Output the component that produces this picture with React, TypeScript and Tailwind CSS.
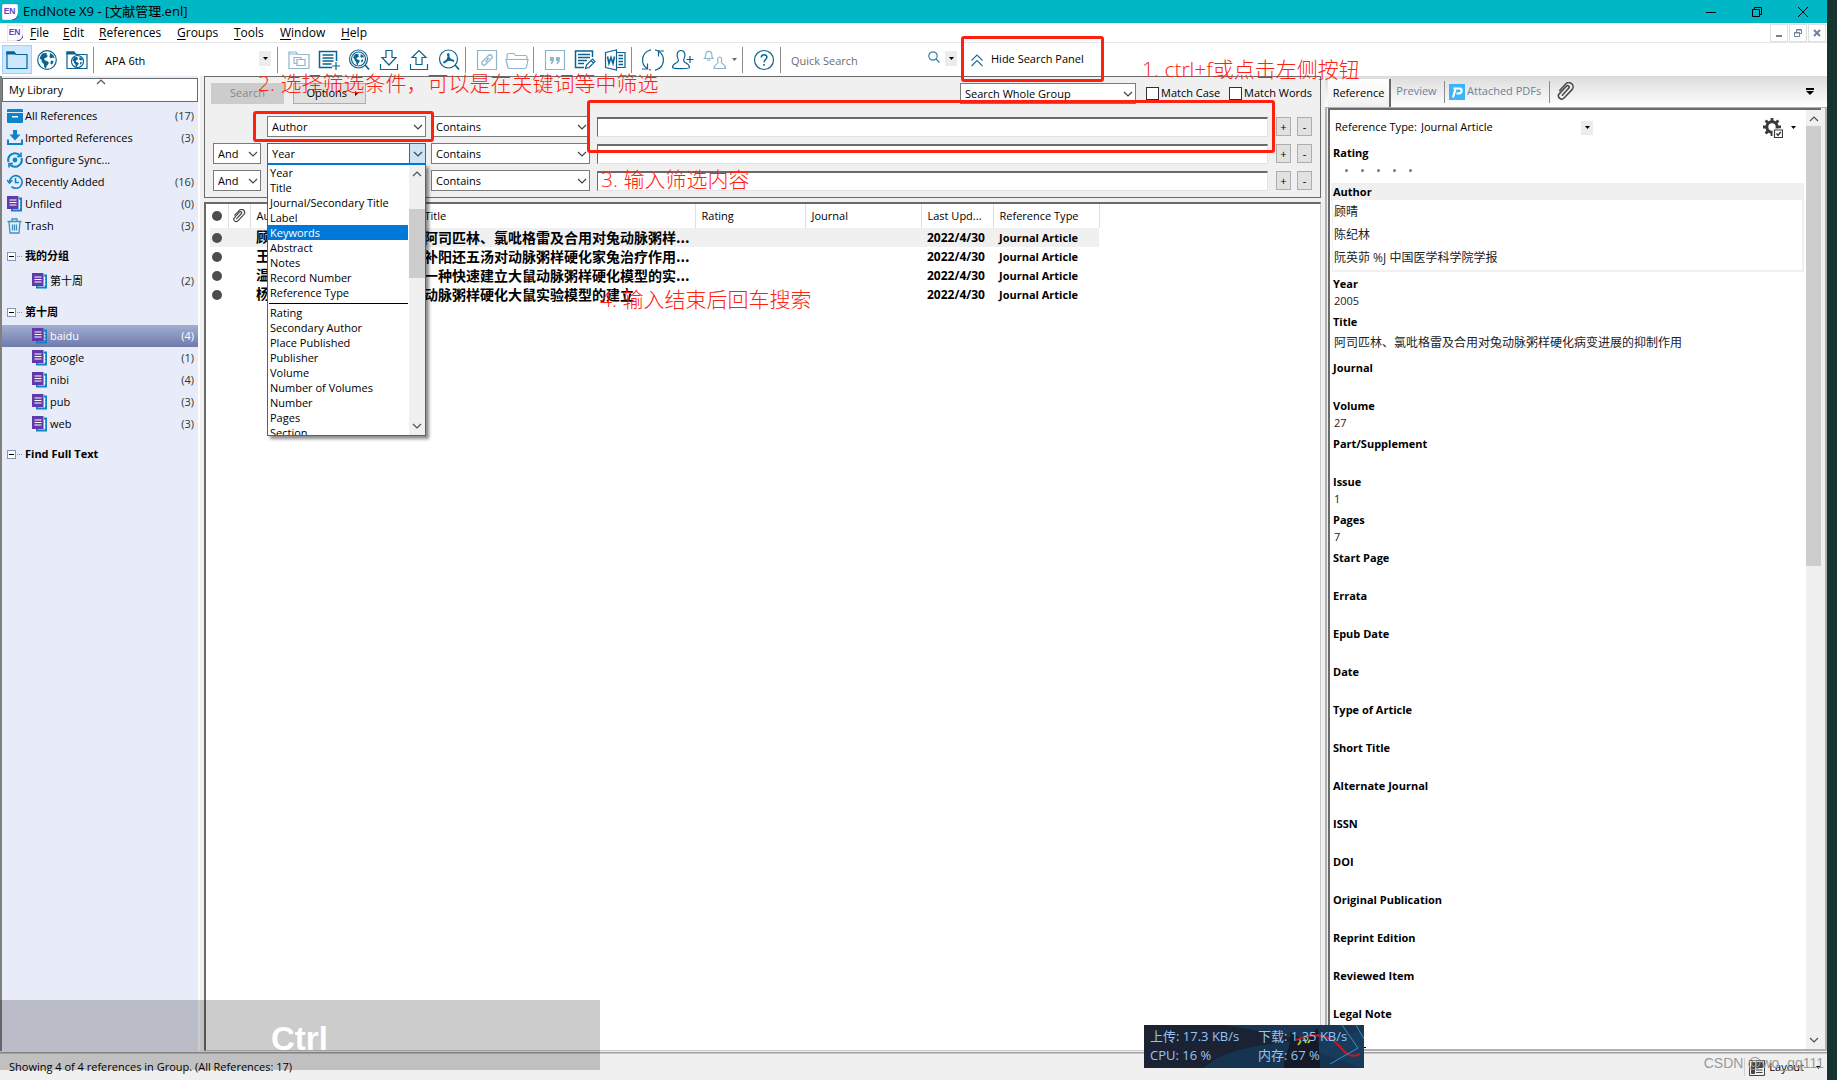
import React from "react";

const SANS = "font-['Open_Sans','Noto_Sans_CJK_SC',sans-serif]";

/* ---------- small shared pieces ---------- */

function Chevron({ up = false, className = "" }: { up?: boolean; className?: string }) {
  return (
    <svg viewBox="0 0 10 6" className={"h-[6px] w-[10px] " + className} fill="none" stroke="currentColor" strokeWidth="1.2">
      <path d={up ? "M1 5 5 1 9 5" : "M1 1 5 5 9 1"} />
    </svg>
  );
}

function Caret({ className = "" }: { className?: string }) {
  return (
    <svg viewBox="0 0 5 3" className={"h-[3px] w-[5px] " + className} fill="currentColor">
      <path d="M0 0h5L2.5 3z" />
    </svg>
  );
}

function Note({ children, className }: { children: React.ReactNode; className: string }) {
  return (
    <span
      className={
        "pointer-events-none absolute z-30 font-['Open_Sans','Noto_Sans_CJK_SC',sans-serif] text-[21px] leading-[28px] font-light whitespace-nowrap text-[#ff2010] " +
        className
      }
    >
      {children}
    </span>
  );
}

function Select({ label, value, options, className, open = false }: { label: string; value: string; options: string[]; className: string; open?: boolean }) {
  return (
    <span className={"relative block h-[21px] shrink-0 " + className}>
      <select
        aria-label={label}
        defaultValue={value}
        className={
          "block h-full w-full appearance-none border bg-white pl-1 text-[11px] leading-[19px] outline-none " +
          (open ? "border-[#0078d7]" : "border-[#7a7a7a]")
        }
      >
        {options.map((o) => (
          <option key={o}>{o}</option>
        ))}
      </select>
      <span
        className={
          "pointer-events-none absolute inset-y-0 right-0 flex w-[17px] items-center justify-center text-[#444] " +
          (open ? "border border-[#0078d7] bg-[#cce4f7]" : "")
        }
      >
        <Chevron />
      </span>
    </span>
  );
}

function EndNoteLogo() {
  return (
    <svg viewBox="0 0 16 16" className="size-4 shrink-0">
      <path d="M2 0h12a2 2 0 0 1 2 2v10l-4 4H2a2 2 0 0 1-2-2V2a2 2 0 0 1 2-2z" fill="#fff" stroke="#b9b9c6" strokeWidth=".6" />
      <path d="M16 9v3.500l-3.500 3.500H9C13 15 15.500 13 16 9z" fill="#5a2fb0" />
      <text x="7.600" y="10.200" textAnchor="middle" fontSize="8.500" fontWeight="700" fill="#6a3fc4" fontFamily="Liberation Sans, sans-serif">EN</text>
    </svg>
  );
}

function Paperclip({ className }: { className: string }) {
  return (
    <svg viewBox="0 0 18 18" className={className} fill="none" stroke="currentColor" strokeWidth="1.500" strokeLinecap="round">
      <path d="M6 12.500 12.200 5.800a1.500 1.500 0 0 0-2.200-2L3.200 11a3 3 0 0 0 4.400 4.200L15.200 7.200a4 4 0 0 0-5.800-5.500L3.500 8" />
    </svg>
  );
}

/* ---------- toolbar icons ---------- */

const land = (
  <path
    d="M6 4.500c2-.5 4-.8 5-.3l-.5 1.800 1.500.8-1.500 1.700-2 .8-.2 1.800 2.200.9 2.300 1-.6 2.200-1.700 2-.6 2.300-1.700-1.200-.4-3.300-1.900-1.700-.5-2.500-1.900-1.600zM14 4l3.200 2 1.600 3.200-2.300-.6-1.600.8-1.600-1.700.6-1.600zM15.300 11.500l2.200.4-.6 2.500-1.800 1.400-.7-2.300z"
    fill="currentColor"
    stroke="none"
  />
);

const icons: Record<string, React.ReactNode> = {
  folder: (
    <>
      <path d="M1 19.500V3h7l2 2.500h11v14z" />
      <path d="M1 3h7l1 2H1z" fill="currentColor" />
    </>
  ),
  globe: (
    <>
      <circle cx="11" cy="11" r="9.300" />
      {land}
    </>
  ),
  folderGlobe: (
    <>
      <path d="M1 19.500V3h7l2 2.500h11v14z" />
      <path d="M1 3h7l1 2H1z" fill="currentColor" />
      <circle cx="11.500" cy="12.500" r="6" />
      <g transform="translate(4.300 5.300) scale(.66)">{land}</g>
    </>
  ),
  copyFolder: (
    <>
      <path d="M1 19.500V3h7l2 2.500h11v14zM1 5h8" />
      <path d="M6 14.500V8.500h7v2M6 14.500h3M9 10.500h8v6H9z" />
    </>
  ),
  listPlus: (
    <>
      <path d="M18.500 12V2.500h-17v16H14M4.500 6h11M4.500 9h11M4.500 12h11M4.500 15h9" strokeWidth="1.500" />
      <path d="M18 13v8M14 17h8" />
    </>
  ),
  globeSearch: (
    <>
      <circle cx="10.500" cy="10" r="9" />
      <circle cx="10.500" cy="10" r="7" />
      <g transform="translate(2.500 2) scale(.73)">{land}</g>
      <path d="m17 16 4 4.500" strokeWidth="1.800" />
    </>
  ),
  download: <path d="M8 1.500h6v7h4l-7 7.500-7-7.500h4zM2.500 15v5.500h17V15" />,
  upload: <path d="M8 15.500h6v-7h4L11 1.500 4 8.500h4zM2.500 15v5.500h17V15" />,
  fullText: (
    <>
      <circle cx="10.500" cy="10" r="9" />
      <path d="M10 4.500c2 3-1 8-4.500 9.500M10 4.500c-1 4 3 7 6 7.500M5.500 14c2-3 7-4 10.500-2" strokeWidth="1.800" />
      <path d="m17 16 4 4.500" strokeWidth="1.800" />
    </>
  ),
  link: (
    <>
      <path d="M1.500 1.500h19v19h-19z" />
      <path d="m9.500 12.500 3.500-3.500M10.500 8.500l2-2a2 2 0 0 1 3 3l-3 3a2 2 0 0 1-2.500 0M11.500 13.500l-2 2a2 2 0 0 1-3-3l3-3a2 2 0 0 1 2.500 0" />
    </>
  ),
  openFolder: <path d="M1 10V6.500C1 5 2 4.500 3 4.500h5l1.500 2h10c1 0 1.500.5 1.500 1.500v2M0 10.500h22l-1.500 7.500c-.2 1-1 1.500-2 1.500h-15c-1 0-1.500-.5-1.800-1.500z" />,
  quote: (
    <>
      <path d="M1.500 1.500h19v19h-19z" />
      <path d="M6 8h3.800v4.200L8 15H6.500l1.200-3H6zM12 8h3.800v4.200L14 15h-1.500l1.200-3H12z" fill="currentColor" stroke="none" />
    </>
  ),
  edit: (
    <>
      <path d="M18.500 8V2h-17v16.500H10" strokeWidth="1.500" />
      <path d="M4 5.500h12M4 8.500h12M4 11.500h9M4 14.500h6" strokeWidth="1.600" />
      <path d="m11.500 19.500 1-3.500 6-6 2.500 2.500-6 6zM17 11.500l2.500 2.500" />
    </>
  ),
  word: (
    <>
      <path d="M13 3.500h8v15h-8" />
      <path d="M14.500 6.500h4.500M14.500 9.500h4.500M14.500 12.500h4.500M14.500 15.500h4.500" strokeWidth="1.500" />
      <path d="M1.500 3.500 12.500 1v20L1.500 18.500z" />
      <path d="m3.500 7.500 1.500 7 2-6 2 6 1.500-7" strokeWidth="1.600" />
    </>
  ),
  sync: (
    <>
      <path d="M5 19.500A10.300 10.300 0 0 1 7 1.500a10.300 10.300 0 0 1 10 1M17 2.500A10.300 10.300 0 0 1 15 20.500a10.300 10.300 0 0 1-8 0" strokeDasharray="24 4" />
      <path d="M0 20h5.500v-5.500M22 2h-5.500v5.500" />
    </>
  ),
  userPlus: (
    <path d="M6 10c-1.500-3-1.500-8.500 3-8.500s4.500 5.500 3 8.500c-1 2 0 3 2 4s3.500 2 3.500 4.500c0 1.500-17 1.500-17 0C.5 16 2 15 4 14s3-2 2-4zM14.500 10.500h7M18 7v7" />
  ),
  help: (
    <>
      <circle cx="11" cy="11" r="9.500" />
      <path d="M8.300 8.500c0-3.800 5.600-3.600 5.600-.2 0 2.200-2.800 2.200-2.800 5" strokeWidth="1.500" />
      <path d="M11 15v1.800" strokeWidth="1.600" />
    </>
  ),
};

function ToolButton({ name, label, dim = false, active = false }: { name: string; label: string; dim?: boolean; active?: boolean }) {
  return (
    <button
      type="button"
      aria-label={label}
      className={
        "flex h-[29px] w-[30px] shrink-0 items-center justify-center " +
        (active ? "border border-[#99d1ff] bg-[#cce8ff] " : "") +
        (dim ? "text-[#8db5cc]" : "text-[#0b6391]")
      }
    >
      <svg viewBox="0 0 22 22" className="size-[22px] shrink-0 overflow-visible" fill="none" stroke="currentColor" strokeWidth="1.200">
        {icons[name]}
      </svg>
    </button>
  );
}

function ToolSep() {
  return <span className="mr-[6px] ml-px h-[26px] w-px shrink-0 bg-[#8c8c8c]" />;
}

function Toolbar() {
  return (
    <div className="flex h-[33px] shrink-0 items-center bg-white pl-[2px]">
      <ToolButton name="folder" label="Local library" active />
      <ToolButton name="globe" label="Online search" />
      <ToolButton name="folderGlobe" label="Integrated library" />
      <ToolSep />
      <span className="relative mr-[5px] w-[171px] shrink-0">
        <select aria-label="Output style" className="h-[22px] w-full appearance-none pl-[5px] text-[11px]">
          <option>APA 6th</option>
        </select>
        <span className="pointer-events-none absolute top-1 right-0 flex h-[15px] w-3 items-center justify-center bg-[#ececec]">
          <Caret />
        </span>
      </span>
      <ToolSep />
      <ToolButton name="copyFolder" label="Copy to local library" dim />
      <ToolButton name="listPlus" label="New reference" />
      <ToolButton name="globeSearch" label="Online search" />
      <ToolButton name="download" label="Import" />
      <ToolButton name="upload" label="Export" />
      <ToolButton name="fullText" label="Find full text" />
      <ToolSep />
      <ToolButton name="link" label="Open link" dim />
      <ToolButton name="openFolder" label="Open file" dim />
      <ToolSep />
      <ToolButton name="quote" label="Insert citation" dim />
      <ToolButton name="edit" label="Format bibliography" />
      <ToolButton name="word" label="Return to Word" />
      <ToolSep />
      <ToolButton name="sync" label="Sync library" />
      <ToolButton name="userPlus" label="Share library" />
      <button type="button" aria-label="Activity feed" className="flex h-[29px] w-[43px] shrink-0 items-center justify-between pr-1 pl-[6px] text-[#8db5cc]">
        <svg viewBox="0 0 22 22" className="size-[22px] overflow-visible" fill="none" stroke="currentColor" strokeWidth="1.200">
          <path d="M.5 9.500h8.500c-1.500-1.500-1-2.500-1.300-4.500-.4-3.500-5.500-3.500-5.900 0C1.500 7 2 8 .5 9.500zM3.500 10.500c.5 1.300 2 1.300 2.500 0" />
          <path d="M14.200 13c-1-2-.8-5 1.500-5s2.500 3 1.500 5c-.5 1.500 4.300 2 4.300 6.500H10c0-4.500 4.800-5 4.200-6.500z" />
        </svg>
        <Caret className="text-[#666]" />
      </button>
      <ToolSep />
      <ToolButton name="help" label="Help" />
      <ToolSep />
      <label className="relative block w-[170px] shrink-0">
        <input aria-label="Quick Search" placeholder="Quick Search" className="h-[22px] w-full pr-8 pl-1 text-[11px] outline-none placeholder:text-[#6d6d6d]" />
        <svg viewBox="0 0 12 12" className="absolute top-1 right-[17px] size-3" fill="none" stroke="#3a81a8" strokeWidth="1.200">
          <circle cx="5" cy="5" r="4.200" />
          <path d="m8 8 3.500 3.500" />
        </svg>
        <span className="absolute top-1 right-0 flex h-[15px] w-3 items-center justify-center bg-[#ececec]">
          <Caret />
        </span>
      </label>
      <div className="relative ml-1 shrink-0">
        <button type="button" className="flex h-[22px] items-center gap-2 px-[10px] text-[11px] whitespace-nowrap">
          <svg viewBox="0 0 12 12" className="size-3 overflow-visible" fill="none" stroke="#1b6f9b" strokeWidth="1.100">
            <path d="m.5 6.500 5.500-5.500 5.500 5.500M.5 12 6 6.500 11.500 12" />
          </svg>
          Hide Search Panel
        </button>
        <span className="pointer-events-none absolute -top-[13px] left-0 z-20 h-[46px] w-[143px] rounded-[3px] border-3 border-[#ff2010]" />
        <Note className="top-[6px] left-[181px]">1. ctrl+f或点击左侧按钮</Note>
      </div>
    </div>
  );
}

/* ---------- sidebar ---------- */

function GroupIcon() {
  return (
    <svg viewBox="0 0 16 16" className="size-4 shrink-0">
      <path d="M12 2.500h2v12H5V13" fill="none" stroke="#0b85c9" strokeWidth="2" />
      <path d="M0 0h11.500v13H0z" fill="#6239ab" />
      <path d="M2.500 4h7M2.500 6.500h7M2.500 9h7" stroke="#fff" strokeWidth="1.100" />
      <path d="M12 5h1.500M12 8h1.500M12 11h1.500" stroke="#fff" strokeWidth="1" />
    </svg>
  );
}

const sideIcons: Record<string, React.ReactNode> = {
  all: (
    <>
      <path d="M0 2.500C0 1.500.5 1 1.500 1h13c1 0 1.500.5 1.500 1.500V4H0zM0 5h16v8.500c0 1-.5 1.500-1.500 1.500h-13C.5 15 0 14.500 0 13.500z" fill="#0b85c9" />
      <path d="M5 8h6v1.500H5z" fill="#fff" />
    </>
  ),
  imported: (
    <>
      <path d="M6 0h4v4.500h3.500L8 10.500 2.500 4.500H6z" fill="#0b85c9" />
      <path d="M0 9.500h2V13h12V9.500h2V15H0z" fill="#0b85c9" />
    </>
  ),
  sync: (
    <g fill="none" stroke="#0b85c9" strokeWidth="2">
      <path d="M1.500 10A6.800 6.800 0 0 1 13 3.500M14.500 6A6.800 6.800 0 0 1 3 12.500" />
      <path d="M14 .5v4h-4M2 15.500v-4h4" strokeWidth="1.600" />
      <circle cx="8" cy="8" r="2.400" fill="#0b85c9" stroke="none" />
    </g>
  ),
  recent: (
    <g fill="none" stroke="#0b85c9" strokeWidth="1.600">
      <path d="M2.500 8a6.300 6.300 0 1 1 2 4.600M8.500 4v4.500h3.500" />
      <path d="m0 6 2.500 3L5.300 6" />
    </g>
  ),
  trash: (
    <g fill="none" stroke="#3a93c4" strokeWidth="1.300">
      <path d="M.5 3.500h14M5 3V1h5v2M2 4l1 11h9l1-11M5.500 6.500v6M7.500 6.500v6M9.500 6.500v6" />
    </g>
  ),
};

function SideRow({ icon, label, count, nested = false, selected = false }: { icon?: string; label: string; count?: number; nested?: boolean; selected?: boolean }) {
  return (
    <button
      type="button"
      className={
        "flex h-[22px] w-full items-center gap-[2px] pr-1 text-left text-[11px] leading-[22px] " +
        (nested ? "pl-[30px] " : "pl-[5px] ") +
        (selected ? "bg-linear-to-b from-[#a3aed2] to-[#6f7cab] text-white" : "")
      }
    >
      {icon ? (
        <svg viewBox="0 0 16 16" className="size-4 shrink-0">
          {sideIcons[icon]}
        </svg>
      ) : (
        <GroupIcon />
      )}
      <span className="flex-1">{label}</span>
      {count !== undefined && <span className={selected ? "text-white" : "text-[#333]"}>({count})</span>}
    </button>
  );
}

function GroupHead({ label }: { label: string }) {
  return (
    <h3 className="mt-2 flex h-[22px] items-center text-[11px] leading-[22px] font-bold">
      <button type="button" aria-label={"Collapse " + label} className="ml-[5px] flex size-[9px] items-center justify-center border border-[#7d98b0] bg-white">
        <span className="h-px w-[5px] bg-black" />
      </button>
      <span className="mr-[3px] ml-px w-[5px] border-t border-dotted border-[#7d98b0]" />
      {label}
    </h3>
  );
}

function Sidebar() {
  return (
    <aside className="flex w-[200px] shrink-0 flex-col border-r-2 border-l-2 border-[#808080] border-r-white bg-[#e8ecf9]">
      <div className="relative mt-[2px] flex h-6 shrink-0 items-center border border-[#6a6a6a] bg-white pl-[6px] text-[11px]">
        My Library
        <Chevron up className="absolute top-0 left-[93px] text-[#555]" />
      </div>
      <nav className="mt-[3px] flex flex-col">
        <SideRow icon="all" label="All References" count={17} />
        <SideRow icon="imported" label="Imported References" count={3} />
        <SideRow icon="sync" label="Configure Sync..." />
        <SideRow icon="recent" label="Recently Added" count={16} />
        <SideRow label="Unfiled" count={0} />
        <SideRow icon="trash" label="Trash" count={3} />
        <GroupHead label="我的分组" />
        <div className="pt-[3px]">
          <SideRow nested label="第十周" count={2} />
        </div>
        <div className="pt-px">
          <GroupHead label="第十周" />
        </div>
        <div className="pt-[2px]">
          <SideRow nested selected label="baidu" count={4} />
          <SideRow nested label="google" count={1} />
          <SideRow nested label="nibi" count={4} />
          <SideRow nested label="pub" count={3} />
          <SideRow nested label="web" count={3} />
        </div>
        <GroupHead label="Find Full Text" />
      </nav>
    </aside>
  );
}

/* ---------- search panel ---------- */

const fieldsTop = ["Year", "Title", "Journal/Secondary Title", "Label", "Keywords", "Abstract", "Notes", "Record Number", "Reference Type"];
const fieldsRest = ["Rating", "Secondary Author", "Place Published", "Publisher", "Volume", "Number of Volumes", "Number", "Pages", "Section"];

function FieldMenu() {
  const item = (f: string) => (
    <li
      key={f}
      role="option"
      aria-selected={f === "Keywords"}
      className={"h-[15px] pl-[2px] text-[11px] leading-[15px] " + (f === "Keywords" ? "bg-[#0078d7] text-white" : "")}
    >
      {f}
    </li>
  );
  return (
    <div className="absolute top-full left-0 z-10 flex h-[272px] w-full border border-[#0078d7] bg-white shadow-[3px_3px_3px_rgba(0,0,0,0.45)]">
      <ul role="listbox" aria-label="Search field" className="flex-1 overflow-hidden">
        {fieldsTop.map(item)}
        <li role="separator" className="mt-[3px] mb-px ml-px h-px bg-black" />
        {fieldsRest.map(item)}
      </ul>
      <div className="ml-px flex w-4 flex-col items-center bg-[#f0f0f0] text-[#505050]">
        <Chevron up className="mt-[6px]" />
        <span className="mt-8 h-[69px] w-full bg-[#cdcdcd]" />
        <Chevron className="mt-auto mb-[6px]" />
      </div>
    </div>
  );
}

function SearchRow({ first = false, open = false, field }: { first?: boolean; open?: boolean; field: string }) {
  return (
    <div className="flex h-[21px] items-center">
      {first ? <span className="w-12 shrink-0" /> : <Select label="Operator" value="And" options={["And", "Or", "Not"]} className="w-12" />}
      <div className="relative ml-[6px] shrink-0">
        <Select label="Field" value={field} options={["Author", "Year", "Title", "Keywords"]} className="w-[159px]" open={open} />
        {open && <FieldMenu />}
        {first && <span className="pointer-events-none absolute -top-[5px] -left-[14px] z-20 h-[31px] w-[181px] rounded-[3px] border-3 border-[#ff2010]" />}
      </div>
      <Select label="Comparison" value="Contains" options={["Contains", "Is"]} className="ml-[5px] w-[159px]" />
      <div className="relative ml-[7px] flex-1">
        <input aria-label="Search text" className="block h-5 w-full border border-t-2 border-[#e3e3e3] border-t-[#6a6a6a] border-l-[#6a6a6a] bg-white outline-none" />
        {first && <span className="pointer-events-none absolute -top-[17px] -right-[7px] -left-[10px] z-20 h-[53px] rounded-[3px] border-3 border-[#ff2010]" />}
      </div>
      <button type="button" aria-label="Add row" className="ml-2 h-[19px] w-[15px] border border-[#adadad] bg-[#e1e1e1] text-[11px] leading-[15px]">
        +
      </button>
      <button type="button" aria-label="Remove row" className="ml-[6px] h-[19px] w-[15px] border border-[#adadad] bg-[#e1e1e1] text-[11px] leading-[15px]">
        -
      </button>
    </div>
  );
}

function SearchPanel() {
  return (
    <section className="relative flex h-[122px] shrink-0 flex-col border border-[#6a6a6a] px-2">
      <div className="mt-[6px] flex h-[21px] items-center text-[11px]">
        <button type="button" disabled className="-ml-[2px] h-[21px] w-[73px] bg-[#cccccc] text-[#888]">
          Search
        </button>
        <button type="button" className="ml-[9px] flex h-[21px] w-[73px] items-center justify-end gap-2 border border-[#adadad] bg-[#e1e1e1] pr-[7px]">
          Options
          <svg viewBox="0 0 3 5" className="h-[5px] w-[3px]">
            <path d="M0 0v5l3-2.500z" />
          </svg>
        </button>
        <span className="flex-1" />
        <Select label="Search scope" value="Search Whole Group" options={["Search Whole Group", "Search Whole Library"]} className="w-[176px]" />
        <label className="ml-[10px] flex w-[83px] items-center gap-[2px] whitespace-nowrap">
          <input type="checkbox" className="size-[13px] shrink-0 appearance-none border border-[#333] bg-white" />
          Match Case
        </label>
        <label className="flex w-[83px] items-center gap-[2px] whitespace-nowrap">
          <input type="checkbox" className="size-[13px] shrink-0 appearance-none border border-[#333] bg-white" />
          Match Words
        </label>
      </div>
      <div className="mt-3 flex flex-col gap-[6px]">
        <SearchRow first field="Author" />
        <SearchRow open field="Year" />
        <SearchRow field="Title" />
      </div>
      <Note className="-top-[8px] left-[53px]">2. 选择筛选条件，可以是在关键词等中筛选</Note>
      <Note className="top-[88px] left-[396px]">3. 输入筛选内容</Note>
    </section>
  );
}

/* ---------- reference list ---------- */

const refs = [
  ["顾晴", "阿司匹林、氯吡格雷及合用对兔动脉粥样..."],
  ["王", "补阳还五汤对动脉粥样硬化家兔治疗作用..."],
  ["温", "一种快速建立大鼠动脉粥样硬化模型的实..."],
  ["杨", "动脉粥样硬化大鼠实验模型的建立"],
];

function ReferenceList() {
  const th = "h-6 border-r border-[#e0e0e0] pl-[6px] text-left font-normal whitespace-nowrap";
  return (
    <section className="relative mt-1 flex-1 overflow-hidden border-t-2 border-r border-b border-l-2 border-[#6a6a6a] border-r-[#c8c8c8] border-b-[#c8c8c8] bg-white pl-1">
      <table className="w-[889px] table-fixed border-collapse text-[11px] leading-[18px]">
        <colgroup>
          <col className="w-[18px]" />
          <col className="w-[22px]" />
          <col className="w-[168px]" />
          <col className="w-[277px]" />
          <col className="w-[110px]" />
          <col className="w-[116px]" />
          <col className="w-[72px]" />
          <col className="w-[106px]" />
        </colgroup>
        <thead>
          <tr>
            <th className="h-6 border-r border-[#e0e0e0] pl-[2px]" aria-label="Read status">
              <span className="block size-[10px] rounded-full bg-[#4d4d4d]" />
            </th>
            <th className="h-6 border-r border-[#e0e0e0] pl-[3px]" aria-label="Attachment">
              <Paperclip className="size-[14px] text-[#444]" />
            </th>
            <th className={th}>Author</th>
            <th className={th}>Title</th>
            <th className={th}>Rating</th>
            <th className={th}>Journal</th>
            <th className={th}>Last Upd...</th>
            <th className={th}>Reference Type</th>
          </tr>
        </thead>
        <tbody>
          {refs.map(([author, title], i) => (
            <tr key={title} className={"h-[19px] font-bold whitespace-nowrap " + (i === 0 ? "bg-[#f0f0f0]" : "")}>
              <td className="pl-[2px]">
                <span className="block size-[10px] rounded-full bg-[#4d4d4d]" />
              </td>
              <td />
              <td className="overflow-hidden pb-px pl-[6px] text-sm leading-[18px]">{author}</td>
              <td className="overflow-hidden pb-px pl-[6px] font-['Noto_Sans_CJK_SC',sans-serif] text-sm leading-[18px]">{title}</td>
              <td />
              <td />
              <td className="pl-[6px] text-xs leading-[18px]">2022/4/30</td>
              <td className="pl-[6px]">Journal Article</td>
            </tr>
          ))}
        </tbody>
      </table>
      <Note className="top-[81px] left-[394px]">4. 输入结束后回车搜索</Note>
    </section>
  );
}

/* ---------- reference details ---------- */

const fields: [string, string?][] = [
  ["Journal"], ["Volume", "27"], ["Part/Supplement"], ["Issue", "1"], ["Pages", "7"], ["Start Page"], ["Errata"], ["Epub Date"], ["Date"],
  ["Type of Article"], ["Short Title"], ["Alternate Journal"], ["ISSN"], ["DOI"], ["Original Publication"], ["Reprint Edition"], ["Reviewed Item"], ["Legal Note"],
];

function Field({ name, value }: { name: string; value?: string }) {
  return (
    <div className="h-[38px] shrink-0">
      <dt className="leading-4 font-bold">{name}</dt>
      <dd className="pl-px leading-[18px] text-[#222]">{value}</dd>
    </div>
  );
}

function Details() {
  return (
    <section className="ml-1 flex w-[502px] shrink-0 flex-col">
      <div role="tablist" className="flex h-[31px] shrink-0 items-center bg-linear-to-b from-[#dcdcdc] to-white pl-[3px] text-[11px]">
        <button type="button" role="tab" aria-selected="true" className="mt-[3px] h-7 w-[63px] border-r-2 border-[#6a6a6a] bg-linear-to-b from-white to-[#f0f0f0] font-medium">
          Reference
        </button>
        <button type="button" role="tab" className="h-[22px] w-[54px] border-r border-[#8c8c8c] pr-[2px] text-[#6f8098]">
          Preview
        </button>
        <button type="button" role="tab" className="flex h-[22px] w-[105px] items-center gap-[2px] border-r border-[#8c8c8c] pl-1 whitespace-nowrap text-[#6f8098]">
          <svg viewBox="0 0 16 16" className="size-4 shrink-0">
            <path d="M0 0h16v16H0z" fill="#3cb4f5" />
            <path d="m4 13.500 2.500-8.500M4.500 4.500h6c3.500 0 2.500 5-1 5H7.500" fill="none" stroke="#fff" strokeWidth="2.200" />
          </svg>
          Attached PDFs
        </button>
        <button type="button" role="tab" aria-label="Attachments" className="ml-[6px]">
          <Paperclip className="size-[19px] text-[#4a4a4a]" />
        </button>
        <button type="button" aria-label="Panel options" className="mr-[13px] ml-auto">
          <svg viewBox="0 0 8 7" className="h-[7px] w-2">
            <path d="M0 0h8v2H0zM0 3h8L4 7z" />
          </svg>
        </button>
      </div>
      <div className="flex min-h-0 flex-1 border-x-2 border-t border-b-2 border-[#b0b0b0] pr-1 pl-px">
        <div className="flex min-w-0 flex-1 border-t-2 border-l-2 border-[#6a6a6a] bg-white">
          <div className="flex min-w-0 flex-1 flex-col overflow-hidden text-[11px]">
            <div className="flex h-[35px] shrink-0 items-center pr-[10px] pl-[5px]">
              <label htmlFor="reftype" className="w-[86px] shrink-0 whitespace-nowrap">
                Reference Type:
              </label>
              <span className="relative w-[172px]">
                <select id="reftype" className="h-5 w-full appearance-none">
                  <option>Journal Article</option>
                </select>
                <span className="pointer-events-none absolute top-[3px] right-0 flex h-[14px] w-3 items-center justify-center bg-[#ececec]">
                  <Caret />
                </span>
              </span>
              <button type="button" aria-label="Field settings" className="ml-auto flex items-center gap-2">
                <svg viewBox="0 0 20 20" className="size-5" fill="none" stroke="#3a3a3a">
                  <circle cx="9" cy="9" r="5.200" strokeWidth="3" />
                  <path d="M9 0v4M9 14v4M0 9h4M14 9h4M2.600 2.600l3 3M15.400 2.600l-3 3M2.600 15.400l3-3" strokeWidth="2.800" />
                  <path d="M9.500 10.500H20V20H9.500z" fill="#fff" stroke="none" />
                  <path d="M11.500 12h8v7.500h-8z" fill="#fff" strokeWidth="1.200" />
                  <path d="m13.500 15.500 1.500 1.800 2.700-3.300" strokeWidth="1.500" />
                </svg>
                <Caret />
              </button>
            </div>
            <dl className="flex flex-col">
              <div className="h-[38px] shrink-0 pl-[3px]">
                <dt className="leading-4 font-bold">Rating</dt>
                <dd className="mt-2 flex gap-[13px] pl-3">
                  {[1, 2, 3, 4, 5].map((n) => (
                    <span key={n} className="size-[3px] rounded-full bg-[#777]" />
                  ))}
                </dd>
              </div>
              <div className="mb-1 w-full shrink-0 pr-[2px] pl-px">
                <dt className="bg-[#f0f0f0] pl-[2px] leading-[17px] font-bold">Author</dt>
                <dd className="ml-px border-2 border-t-0 border-l border-[#f0f0f0] pb-px pl-px text-xs leading-[23px] text-[#222]">
                  <p>顾晴</p>
                  <p>陈纪林</p>
                  <p>阮英茆 %J 中国医学科学院学报</p>
                </dd>
              </div>
              <div className="flex flex-col pl-[3px]">
                <Field name="Year" value="2005" />
                <div className="h-[46px] shrink-0">
                  <dt className="leading-4 font-bold">Title</dt>
                  <dd className="pl-px text-xs leading-[26px] text-[#222]">阿司匹林、氯吡格雷及合用对兔动脉粥样硬化病变进展的抑制作用</dd>
                </div>
                {fields.map(([n, v]) => (
                  <Field key={n} name={n} value={v} />
                ))}
                <span className="mt-[3px] w-[33px] shrink-0 border-t border-dashed border-black" />
              </div>
            </dl>
          </div>
          <div className="flex w-[15px] shrink-0 flex-col items-center bg-[#f0f0f0] text-[#505050]">
            <Chevron up className="mt-[6px] shrink-0" />
            <span className="mt-1 h-[440px] w-full shrink-0 bg-[#cdcdcd]" />
            <Chevron className="mt-auto mb-[6px] shrink-0" />
          </div>
        </div>
      </div>
    </section>
  );
}

/* ---------- overlays ---------- */

function NetworkWidget() {
  return (
    <div className="absolute right-[463px] bottom-3 z-40 h-[43px] w-[220px] overflow-hidden bg-[#1b2233]">
      <svg viewBox="0 0 220 43" className="absolute inset-0 size-full" fill="none">
        <path d="M60 43C90 15 150 20 220 6v37z" fill="#16334f" />
        <path d="M80 0c40 8 70 6 100 30l40 13V0z" fill="#1b4266" opacity=".6" />
        <path d="M140 43c0-14 8-20 6-36l14 8 14-12 2 40z" fill="#141a28" />
        <path d="M152 15c22-10 36-3 46 9 6 8 12 8 18 5" stroke="#c01c22" strokeWidth="2" />
        <path d="m198 0 16 23-28 16M212 0l8 14" stroke="#3f8fc8" />
        <path d="m154 20 3-4M160 13l2 5M164 18l2-3" stroke="#a5c81e" strokeWidth="2" />
      </svg>
      <div className="relative grid grid-cols-[108px_1fr] pt-[2px] pl-[6px] text-[13px] leading-[19px] whitespace-nowrap text-[#93c4f2]">
        <span>上传: 17.3 KB/s</span>
        <span>下载: 1.35 KB/s</span>
        <span>CPU: 16 %</span>
        <span>内存: 67 %</span>
      </div>
    </div>
  );
}

/* ---------- window ---------- */

const menus = [
  ["F", "ile", "w-[33px]"],
  ["E", "dit", "w-9"],
  ["R", "eferences", "w-[78px]"],
  ["G", "roups", "w-[57px]"],
  ["T", "ools", "w-[46px]"],
  ["W", "indow", "w-[61px]"],
  ["H", "elp", "w-9"],
];

export default function App() {
  return (
    <div className={"flex h-screen w-full overflow-hidden bg-[#17332f] text-black " + SANS}>
      <div className="relative flex min-w-0 flex-1 flex-col bg-[#f0f0f0]">
        <header className="flex h-[23px] shrink-0 items-center bg-[#00b7c6] pl-[2px]">
          <EndNoteLogo />
          <h1 className="ml-[5px] text-[13px] leading-[23px]">EndNote X9 - [文献管理.enl]</h1>
          <div className="ml-auto flex">
            <button type="button" aria-label="Minimize" className="flex h-[21px] w-[46px] items-center justify-center">
              <svg viewBox="0 0 10 10" className="size-[10px]" stroke="#000"><path d="M0 5.500h10" /></svg>
            </button>
            <button type="button" aria-label="Restore" className="flex h-[21px] w-[46px] items-center justify-center">
              <svg viewBox="0 0 10 10" className="size-[10px]" fill="none" stroke="#000"><path d="M.5 2.500h7v7h-7zM2.500 2.500v-2h7v7h-2" /></svg>
            </button>
            <button type="button" aria-label="Close" className="mr-px flex h-[21px] w-[46px] items-center justify-center">
              <svg viewBox="0 0 10 10" className="size-[10px]" fill="none" stroke="#000"><path d="m0 0 10 10M10 0 0 10" /></svg>
            </button>
          </div>
        </header>

        <div className="flex h-5 shrink-0 items-center border-b border-[#e6e6e6] bg-white pt-px pl-[7px] text-xs">
          <EndNoteLogo />
          <nav className="ml-[7px] flex">
            {menus.map(([k, rest, w]) => (
              <button key={rest} type="button" className={"text-left whitespace-nowrap " + w}>
                <span className="underline underline-offset-2">{k}</span>
                {rest}
              </button>
            ))}
          </nav>
          <div className="mr-px ml-auto flex gap-px text-[#71819a]">
            <button type="button" aria-label="Minimize document" className="flex size-[18px] items-center justify-center border border-[#e0e0e0]">
              <svg viewBox="0 0 8 8" className="size-2" stroke="currentColor" strokeWidth="2"><path d="M1 7h6" /></svg>
            </button>
            <button type="button" aria-label="Restore document" className="flex size-[18px] items-center justify-center border border-[#e0e0e0]">
              <svg viewBox="0 0 8 8" className="size-2" fill="none" stroke="currentColor"><path d="M.5 3.500h5v4h-5zM.500 4h5M2.500 3.500v-3h5v4h-2M2.500 1h5" /></svg>
            </button>
            <button type="button" aria-label="Close document" className="flex size-[18px] items-center justify-center border border-[#e0e0e0]">
              <svg viewBox="0 0 8 8" className="size-2" stroke="currentColor" strokeWidth="2"><path d="m1 1 6 6M7 1 1 7" /></svg>
            </button>
          </div>
        </div>

        <Toolbar />

        <div className="flex min-h-0 flex-1 border-b border-[#a0a0a0] pb-px">
          <Sidebar />
          <main className="ml-1 flex min-w-0 flex-1 flex-col">
            <SearchPanel />
            <ReferenceList />
          </main>
          <Details />
        </div>

        <footer className="relative flex h-[27px] shrink-0 items-center border-t border-[#c8c8c8] pr-[5px] pl-[9px] text-[11px]">
          <span className="pt-px">Showing 4 of 4 references in Group. (All References: 17)</span>
          <button type="button" className="ml-auto flex items-center gap-1 border-l border-[#d0d0d0] pt-px pr-px pl-1">
            <svg viewBox="0 0 16 16" className="size-4" fill="none" stroke="#444">
              <path d="M.5.5h15v15H.500z" />
              <path d="M2.500 2.500h3v11h-3zM7 2.500h6.500v5H7z" fill="#444" />
              <path d="M7 10h6.500M7 12.500h6.500" />
            </svg>
            Layout
            <Caret className="ml-2" />
          </button>
          <span className="pointer-events-none absolute -top-[2px] right-[3px] font-['Liberation_Sans'] text-sm leading-[22px] text-[#9a9a9a]">CSDN @wo_gq111</span>
        </footer>

        <div className="pointer-events-none absolute bottom-[10px] left-0 z-40 h-[70px] w-[600px] bg-black/20 pt-[21px] pl-[271px] font-['Liberation_Sans'] text-[33px] leading-[36px] font-bold text-white">
          Ctrl
        </div>
        <NetworkWidget />
      </div>
      <div className="w-[10px] shrink-0" />
    </div>
  );
}
